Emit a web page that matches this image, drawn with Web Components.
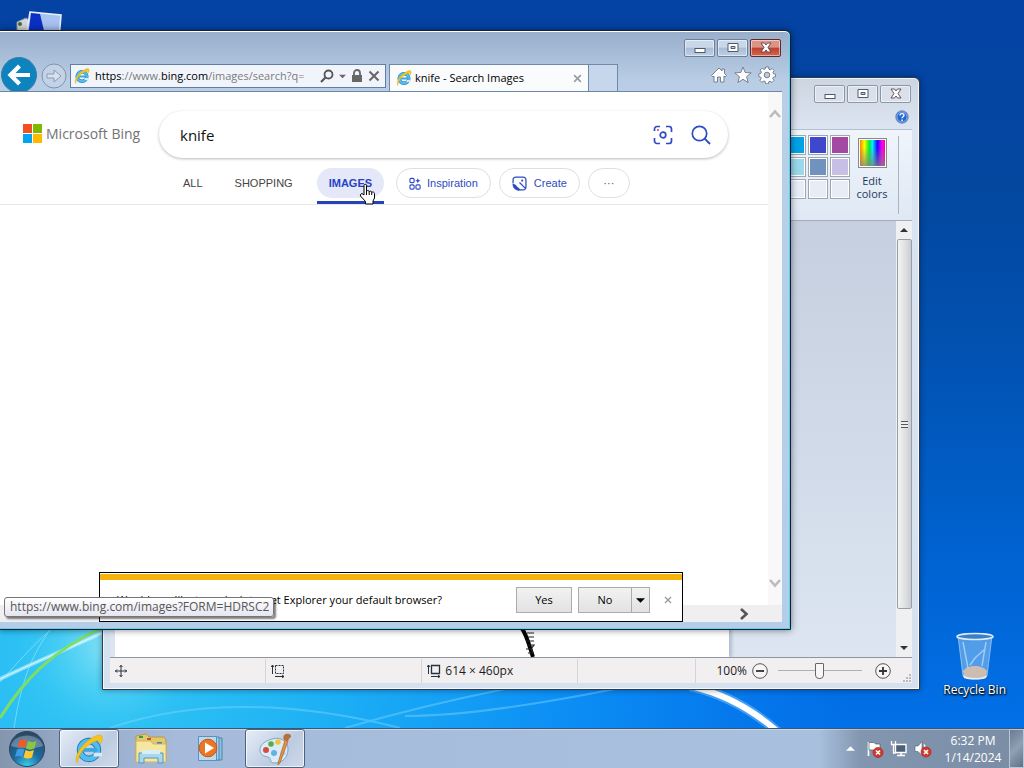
<!DOCTYPE html>
<html lang="en">
<head>
<meta charset="utf-8">
<title>Desktop</title>
<style>
  html, body { height: 100%; margin: 0; }
  body { overflow: hidden; font: 12px/16px "Open Sans", "Noto Sans", sans-serif; color: #000; }
</style>
</head>
<body>
<win-desktop>
  <desktop-icon class="computer" icon="computer"></desktop-icon>
  <desktop-icon class="bin" icon="bin">Recycle Bin</desktop-icon>
  <paint-window></paint-window>
  <browser-window>
    <bing-page></bing-page>
    <notice-bar slot="overlay">Would you like to make Internet Explorer your default browser?</notice-bar>
    <link-tip slot="overlay">https://www.bing.com/images?FORM=HDRSC2</link-tip>
  </browser-window>
  <task-bar slot="bar"></task-bar>
</win-desktop>

<script>
const ICONS = {
  ie: `<svg viewBox="0 0 32 32"><circle cx="16" cy="17" r="9.5" fill="none" stroke="#1879b8" stroke-width="7"/><circle cx="16" cy="17" r="9.5" fill="none" stroke="#52bdec" stroke-width="5"/><path d="M8 15h17v4H8z" fill="#3ba7df"/><path d="M21 20h9v4h-9z" fill="#dbe7f3"/><path d="M4 31C-1 28 5 15 14 8 21 2 29-1 30 3c1 3-1 6-2 8 0-5-4-5-10-1C9 15 4 24 4 31z" fill="#f5c51d" stroke="#e2a913" stroke-width=".6"/></svg>`,
  home: `<svg viewBox="0 0 18 18"><path d="M1.500 9.500 9 2l3 3V3h2.500v4.500l2 2-1.500 1.500-1-1V16h-3.500v-5h-3v5H4v-6l-1 1z" fill="#fff" stroke="#75818f" stroke-linejoin="round"/></svg>`,
  star: `<svg viewBox="0 0 18 18"><path d="m9 1 2.200 5.500 6 .4-4.600 3.800 1.500 5.800L9 13.300l-5.100 3.200 1.500-5.800L.8 6.900l6-.4z" fill="#fff" stroke="#75818f" stroke-linejoin="round"/></svg>`,
  gear: `<svg viewBox="0 0 18 18"><path d="M7.500 1h3l.4 2.200 1.300.6 2-1.300 2 2-1.300 2 .6 1.300 2 .4v2.500l-2.200.5-.6 1.300 1.300 2-2 2-2-1.300-1.300.6-.4 2h-2.600l-.5-2.200-1.300-.6-2 1.300-2-2 1.300-2-.6-1.200L.8 10.500V7.800l2-.4.6-1.300-1.300-2 2-2 2 1.300 1.200-.6z" fill="#fff" stroke="#75818f"/><circle cx="9" cy="9" r="2.800" fill="#b8cde4" stroke="#75818f"/></svg>`,
  back: `<svg viewBox="0 0 36 36"><circle cx="18" cy="18" r="17.500" fill="#0d84bd" stroke="#3b7ba5"/><path d="M29 18H10m8.500-9L9.500 18l9 9" fill="none" stroke="#fff" stroke-width="4.200"/></svg>`,
  forward: `<svg viewBox="0 0 26 26"><circle cx="13" cy="13" r="12" fill="#c3d2e6" stroke="#8294ab"/><path d="M6 11h7V7l7 6-7 6v-4H6z" fill="#d7e2f0" stroke="#8b9bb1" stroke-linejoin="round"/></svg>`,
  find: `<svg viewBox="0 0 14 14"><circle cx="8.500" cy="5.500" r="4" fill="none" stroke="#555" stroke-width="1.800"/><path d="M5.500 8.500 1 13" stroke="#555" stroke-width="2.200"/></svg>`,
  down: `<svg viewBox="0 0 8 8"><path d="M0 2h8L4 6z" fill="currentColor"/></svg>`,
  up: `<svg viewBox="0 0 8 8"><path d="M0 6h8L4 2z" fill="currentColor"/></svg>`,
  lock: `<svg viewBox="0 0 12 14"><path d="M3 7V4a3 3 0 0 1 6 0v3" fill="none" stroke="#666" stroke-width="1.800"/><path d="M1 6h10v7H1z" fill="#666"/></svg>`,
  cross: `<svg viewBox="0 0 12 12"><path d="m1.500 1.500 9 9m0-9-9 9" stroke="currentColor" stroke-width="2"/></svg>`,
  chevron: `<svg viewBox="0 0 12 12"><path d="m1 9 5-5.500L11 9" fill="none" stroke="currentColor" stroke-width="2.600"/></svg>`,
  min: `<svg viewBox="0 0 14 12"><rect x="2" y="6.500" width="10" height="4" fill="#fff" stroke="#4f5b6b"/></svg>`,
  max: `<svg viewBox="0 0 14 12"><path d="M2 1.500h10v8H2z" fill="#fff" stroke="#4f5b6b"/><path d="M5 4.500h4v2H5z" fill="#c6d3e2" stroke="#4f5b6b"/></svg>`,
  close: `<svg viewBox="0 0 14 12"><path d="M2 1h3.500L7 3l1.500-2H12L9 5.500l3 4.500H8.500L7 8l-1.500 2H2l3-4.500z" fill="#fff" stroke="#5a4650" stroke-width=".9"/></svg>`,
  lens: `<svg viewBox="0 0 20 20"><g fill="none" stroke="#2f4bc0" stroke-width="1.700"><path d="M1.500 6V4a2.500 2.500 0 0 1 2.500-2.500h3M13 1.500h3A2.500 2.500 0 0 1 18.500 4v3M18.500 13v3a2.500 2.500 0 0 1-2.500 2.500h-3M7 18.500H4A2.500 2.500 0 0 1 1.500 16v-3"/><circle cx="10" cy="10" r="2.800"/></g><circle cx="5" cy="5" r="1" fill="#b040a0"/></svg>`,
  search: `<svg viewBox="0 0 20 20"><circle cx="8.500" cy="8.500" r="7.200" fill="none" stroke="#2f4bc0" stroke-width="1.700"/><path d="m13.700 13.700 5.300 5.300" stroke="#2f4bc0" stroke-width="1.900"/></svg>`,
  grid: `<svg viewBox="0 0 14 14"><g fill="none" stroke="#2f4bc0" stroke-width="1.200"><rect x="1" y="1.500" width="4.500" height="4.500" rx="1.200"/><rect x="1" y="8.500" width="4.500" height="4.500" rx="1.200"/><rect x="7.500" y="8.500" width="4.500" height="4.500" rx="1.200"/></g><path d="m9.500 1 .8 2.200 2.200.8-2.200.8-.8 2.200-.8-2.200L6.500 4l2.200-.8z" fill="#2f4bc0"/></svg>`,
  create: `<svg viewBox="0 0 14 14"><path d="M5 13h5.500A2.500 2.500 0 0 0 13 10.500v-7A2.500 2.500 0 0 0 10.500 1h-7A2.500 2.500 0 0 0 1 3.500V7m6-1 6 6" fill="none" stroke="#2f4bc0" stroke-width="1.200"/><path d="M.5 7.500C3 7 4 9 5.500 10.500L8 12.500l-1.500 1C3 13.500.5 11 .5 7.500z" fill="#2f4bc0"/><circle cx="9.500" cy="4.300" r="1" fill="#2f4bc0"/></svg>`,
  hand: `<svg viewBox="0 0 18 22"><path d="M5 12V2.500C5 .8 7.500.8 7.500 2.500V8c1-.8 2.500-.5 2.700.5 1-.6 2.300-.3 2.500.7 1.200-.6 2.800 0 2.800 1.500V15l-1.500 3v3h-7.500v-2.500L1.500 13C.6 11 3 10 4 11.200z" fill="#fff" stroke="#000" stroke-linejoin="round"/><path d="M7.500 8v4m2.700-3.500V12m2.500-2.800V12" stroke="#000" fill="none"/></svg>`,
  help: `<svg viewBox="0 0 14 14"><circle cx="7" cy="7" r="6.200" fill="#2465d0" stroke="#7a8fb0"/><circle cx="7" cy="7" r="5" fill="none" stroke="#9cc4ff" stroke-width=".8"/><path d="M5 5.500C5 3 9 3 9 5.300 9 6.700 7 6.700 7 8.300" fill="none" stroke="#fff" stroke-width="1.400"/><path d="M6.300 9.500h1.500V11H6.300z" fill="#fff"/></svg>`,
  move: `<svg viewBox="0 0 12 12"><path d="M6 0v12M0 6h12M4.500 2 6 .5 7.500 2M4.500 10 6 11.500 7.500 10M2 4.500.5 6 2 7.500M10 4.500 11.500 6 10 7.500" fill="none" stroke="#26323e"/></svg>`,
  select: `<svg viewBox="0 0 14 14"><path d="M4.500 1.500h8v8h-8z" fill="none" stroke="#26323e" stroke-dasharray="2 1"/><path d="M1.500 10V1M0 3l1.500-2L3 3M4 12.500h9M11 11l2 1.500-2 1.500" fill="none" stroke="#26323e"/></svg>`,
  canvas: `<svg viewBox="0 0 14 14"><path d="M4.500 1.500h8v8h-8z" fill="none" stroke="#26323e" stroke-width="1.300"/><path d="M1.500 10V1M0 3l1.500-2L3 3M4 12.500h9M11 11l2 1.500-2 1.500" fill="none" stroke="#26323e"/></svg>`,
  minus: `<svg viewBox="0 0 16 16"><circle cx="8" cy="8" r="7.300" fill="#f5f5f5" stroke="#555"/><path d="M4 8h8" stroke="#333" stroke-width="1.800"/></svg>`,
  plus: `<svg viewBox="0 0 16 16"><circle cx="8" cy="8" r="7.300" fill="#f5f5f5" stroke="#555"/><path d="M4 8h8M8 4v8" stroke="#333" stroke-width="1.800"/></svg>`,
  resize: `<svg viewBox="0 0 9 9"><path d="M7 1h2v2H7zM4 4h2v2H4zM7 4h2v2H7zM1 7h2v2H1zM4 7h2v2H4zM7 7h2v2H7z" fill="#b9b9c0"/></svg>`,
  start: `<svg viewBox="0 0 38 38"><defs><radialGradient id="o" cx=".5" cy="1" r=".95"><stop offset="0" stop-color="#3fd2ee"/><stop offset=".45" stop-color="#1b6aa0"/><stop offset="1" stop-color="#2c4865"/></radialGradient></defs><circle cx="19" cy="19" r="17.500" fill="url(#o)" stroke="#2b4560"/><path d="M3 16C6 2 32 2 35 16 26 19 12 19 3 16z" fill="#fff" opacity=".28"/><path d="M11.500 10.500c3-1.500 5-1.500 7.500 0l-2 7.500c-3-1.500-5-1.500-7.500 0z" fill="#f0592a"/><path d="M20 11c3 1.500 5.500 1.500 8.500 0l-2 7.500c-3 1.500-5.500 1.500-8.500 0z" fill="#8cc63e"/><path d="M9 19.500c3-1.500 5-1.500 7.500 0l-2 7.500c-3-1.500-5-1.500-7.500 0z" fill="#3d9be0"/><path d="M17.500 20c3 1.500 5.500 1.500 8.500 0l-2 7.500c-3 1.500-5.500 1.500-8.500 0z" fill="#fdc72e"/></svg>`,
  folder: `<svg viewBox="0 0 34 32"><path d="M2 3 12 1l3 3h15l2 3v21H2z" fill="#e3c96c" stroke="#b89b45"/><path d="M5 3h4v2H5z" fill="#3d9b45"/><path d="M13 5h4v2h-4z" fill="#cf4a30"/><path d="M23 9h5v2h-5z" fill="#3e86b8"/><path d="M2 8h15l2 3h13v18H2z" fill="#f5e6a0" stroke="#d0b75e"/><path d="M5 30V20h24v10h-5v-5H10v5z" fill="#a9d8ee" stroke="#5297bd"/><path d="M8 17h18v4H8z" fill="#d8eef7"/></svg>`,
  media: `<svg viewBox="0 0 28 28"><path d="M8 3h17v22H8z" fill="#8fc0e0" stroke="#4d86ad"/><path d="M5 2h17v23H5z" fill="#a8d0ea" stroke="#4d86ad"/><path d="M1.500 1.500h18v24h-18z" fill="#b9daf0" stroke="#5b93b8"/><circle cx="11" cy="13" r="8.800" fill="#ee7623" stroke="#c9560f"/><path d="M8 7.500 17 13l-9 5.500z" fill="#fff"/></svg>`,
  palette: `<svg viewBox="0 0 34 34"><path d="M14 7C23 4 30 10 30 17c0 9-6 14-14 14-5 0-2-5-6-6-5-1-7-2-8-6C1 13 7 9 14 7z" fill="#dcecf7" stroke="#7fa5c4"/><circle cx="8" cy="18" r="3" fill="#d84b3e"/><circle cx="13" cy="12" r="2.800" fill="#54ad4b"/><circle cx="20" cy="10" r="2.800" fill="#f2c43a"/><circle cx="16" cy="21" r="3" fill="#62b2e4"/><circle cx="25" cy="21" r="2.600" fill="#bcd0e0"/><path d="m20 31 7-23 3 1-8 22-2 2z" fill="#e0924a" stroke="#a96327" stroke-width=".7"/><path d="M26 8c-2-4 1-7 5-6 2 0 3 3 1 4s-1 2-2 3z" fill="#b5703f"/></svg>`,
  flag: `<svg viewBox="0 0 18 18"><path d="M2.500 2v14" stroke="#fff" stroke-width="1.600"/><path d="M3 2.500h5l1.500 1.500H14v8H9L7.500 10H3z" fill="#fff" stroke="#4e5c6c" stroke-width=".7"/><circle cx="12" cy="12.500" r="5" fill="#d5382c" stroke="#a02018" stroke-width=".6"/><path d="m10 10.500 4 4m0-4-4 4" stroke="#fff" stroke-width="1.600"/></svg>`,
  network: `<svg viewBox="0 0 18 18"><path d="M5.500 4.500h10.500v8H5.500z" fill="#4d6076" stroke="#fff" stroke-width="1.400"/><path d="M7 15.500h8M11 12.500v3" stroke="#fff" stroke-width="1.600"/><path d="M1.500 1v3.500h4V1M3.500 4.500V13h2" fill="none" stroke="#fff" stroke-width="1.300"/></svg>`,
  sound: `<svg viewBox="0 0 18 18"><path d="M1 6h3l4-4.500v14L4 11.500H1z" fill="#fff" stroke="#4e5c6c" stroke-width=".6"/><path d="M10 4.500c1.500 2 1.500 5 0 8" fill="none" stroke="#fff" stroke-width="1.300"/><circle cx="12" cy="12" r="5" fill="#d5382c" stroke="#a02018" stroke-width=".6"/><path d="m10 10 4 4m0-4-4 4" stroke="#fff" stroke-width="1.600"/></svg>`,
  computer: `<svg viewBox="0 0 48 48"><path d="m2 12 9-4 3 2v22H2z" fill="#d5d8da" stroke="#8b949c"/><circle cx="5" cy="14" r="2" fill="#3e6b38"/><path d="m15 2 31 3-2 24-33-2z" fill="#a9c2f2" stroke="#e8eef5" stroke-width="1.600"/><path d="m16 3 9 1 6 25-18-2z" fill="#0b2fc4"/></svg>`,
  bin: `<svg viewBox="0 0 40 48"><path d="m3 4 5 40c4 4 20 4 24 0l5-40z" fill="#93c6f2" fill-opacity=".55" stroke="#c3dff5" stroke-opacity=".6"/><path d="M8 39c5-7 20-6 24 0l-1 5c-5 3-17 3-22 0z" fill="#cbbdb2"/><path d="M8 43c5 4 20 4 24 0l-1 3c-5 2-17 2-22 0z" fill="#e9eef2"/><path d="m8 10 5 26m18-26-4 24M15 33l5-7 10-9" stroke="#e1f1ff" stroke-opacity=".55" fill="none" stroke-width="1.500"/><ellipse cx="20" cy="4.500" rx="18" ry="3" fill="#3b80c6" stroke="#dcecf8" stroke-width="1.600"/></svg>`
};

class BaseElement extends HTMLElement {
  connectedCallback() {
    if (!this.shadowRoot) {
      this.attachShadow({ mode: "open" }).innerHTML = this.render();
    }
  }
}

// <win-icon name="..." w="16" h="16">
class WinIcon extends BaseElement {
  render() {
    const w = this.getAttribute("w") || 16;
    const h = this.getAttribute("h") || w;
    return `
      <style>
        :host { display: block; flex: none; width: ${w}px; height: ${h}px; }
        svg { display: block; width: 100%; height: 100%; }
      </style>
      ${ICONS[this.getAttribute("name")]}`;
  }
}

class WinDesktop extends BaseElement {
  render() {
    return `
      <style>
        :host { display: flex; flex-direction: column; height: 100%; min-height: 100vh; }
        main {
          flex: 1;
          position: relative;
          overflow: hidden;
          background: linear-gradient(180deg, #0442a4 0, #03479f 25%, #0250ae 45%, #0062cf 75%, #0270e8 100%);
        }
        .wall { position: absolute; inset: 0; width: 100%; height: 100%; }
        /* windows and icons sit freely on the desktop */
        ::slotted(desktop-icon), ::slotted(paint-window), ::slotted(browser-window) { position: absolute; }
        ::slotted(.computer) { top: 10px; left: 15px; }
        ::slotted(.bin) { right: 18px; top: 632px; }
        ::slotted(paint-window) { top: 77px; left: 102px; right: 104px; bottom: 38px; }
        ::slotted(browser-window) { top: 30px; left: -1px; right: 233px; bottom: 98px; }
      </style>
      <main>
        <svg class="wall" viewBox="0 0 1024 728" preserveAspectRatio="none">
          <defs>
            <radialGradient id="glow" gradientUnits="userSpaceOnUse" cx="90" cy="660" r="760">
              <stop offset="0" stop-color="#35c8f4"/><stop offset=".3" stop-color="#1eb2f5"/>
              <stop offset=".62" stop-color="#0c8ff5"/><stop offset=".9" stop-color="#0474ea"/>
              <stop offset="1" stop-color="#0474ea" stop-opacity="0"/>
            </radialGradient>
            <radialGradient id="shine" gradientUnits="userSpaceOnUse" cx="110" cy="645" r="95">
              <stop offset="0" stop-color="#8ce4f5"/><stop offset="1" stop-color="#35c8f4" stop-opacity="0"/>
            </radialGradient>
          </defs>
          <path d="M0 600h800l140 128H0z" fill="url(#glow)"/>
          <path d="M0 600h300v128H0z" fill="url(#shine)"/>
          <g fill="none">
            <path d="M-4 681C30 664 70 648 104 632" stroke="#d4f5ff" stroke-width="4" opacity=".55"/>
            <path d="M-4 681C30 664 70 648 104 632" stroke="#fff" opacity=".7"/>
            <path d="M0 682C20 660 35 643 55 626M14 728C20 690 28 660 50 630" stroke="#b5efff" opacity=".5"/>
            <path d="M0 718C24 680 52 650 104 627" stroke="#7ede64" stroke-width="3"/>
            <path d="M110 728C190 700 290 700 400 728M345 728C400 712 450 700 510 688M405 716C470 716 560 700 620 688" stroke="#7fd4ff" stroke-width="2" opacity=".45"/>
            <path d="M690 686C726 694 753 710 778 732" stroke="#7ac6ff" stroke-width="10" opacity=".5"/>
            <path d="M690 686C726 694 753 710 778 732" stroke="#fff" stroke-width="6"/>
          </g>
        </svg>
        <slot></slot>
      </main>
      <slot name="bar"></slot>`;
  }
}

class DesktopIcon extends BaseElement {
  render() {
    return `
      <style>
        :host { display: flex; flex-direction: column; align-items: center; gap: 2px; color: #fff; text-shadow: 0 1px 2px #000, 1px 1px 2px #000; }
      </style>
      <win-icon name="${this.getAttribute("icon")}" w="${this.getAttribute("icon") === "bin" ? 40 : 48}" h="48"></win-icon>
      <span><slot></slot></span>`;
  }
}

class CaptionButtons extends BaseElement {
  render() {
    return `
      <style>
        :host { display: flex; gap: 2px; }
        button {
          display: flex; align-items: center; justify-content: center;
          box-sizing: border-box; width: 31px; height: 18px; padding: 0;
          border: 1px solid #6d7f99; border-radius: 2px;
          background: linear-gradient(#c9d8e9 45%, #a9bed7 50%, #bccfe4);
          box-shadow: inset 0 0 0 1px rgba(255, 255, 255, .5);
        }
        .close { background: linear-gradient(#dd9484 45%, #c0402a 50%, #d0674f); border-color: #5c2a30; }
        :host([inactive]) button { background: rgba(225, 232, 241, .5); border-color: #8c97a8; }
      </style>
      <button aria-label="Minimize"><win-icon name="min" w="14" h="12"></win-icon></button>
      <button aria-label="Maximize"><win-icon name="max" w="14" h="12"></win-icon></button>
      <button class="close" aria-label="Close"><win-icon name="close" w="14" h="12"></win-icon></button>`;
  }
}

class PaintWindow extends BaseElement {
  render() {
    const colors = ["#00a2e8", "#3f48cc", "#a349a4", "#99d9ea", "#7092be", "#c8bfe7", "", "", ""];
    return `
      <style>
        :host {
          display: flex; flex-direction: column; box-sizing: border-box;
          padding: 0 7px 6px; border: 1px solid #2c3c50; border-radius: 6px 6px 0 0;
          background: linear-gradient(#ccd5e0 0, #dbe4f0 50px, #d5e1ef);
          box-shadow: inset 0 0 0 1px rgba(255, 255, 255, .7), 0 0 6px rgba(0, 0, 30, .4);
        }
        header { display: flex; flex-direction: column; align-items: flex-end; gap: 7px; padding: 7px 1px 5px 0; }
        header button, footer button { padding: 0; border: 0; background: none; }
        header button { margin-right: 2px; }
        .ribbon {
          display: flex; justify-content: flex-end; gap: 6px; height: 90px;
          border-top: 1px solid #b3c0d0; border-bottom: 1px solid #a3aebd;
          background: linear-gradient(#f0f5fb, #dfe8f4);
        }
        .swatches { display: grid; grid-template-columns: repeat(3, 20px); grid-auto-rows: 20px; gap: 2px; align-content: start; padding-top: 5px; }
        .swatches button { border: 1px solid #a0a6ae; padding: 0; background: #e6edf6; box-shadow: inset 0 0 0 1px #fff; }
        .edit {
          display: flex; flex-direction: column; align-items: center; gap: 6px; width: 32px;
          padding: 8px 0 0; border: 0; background: none; font: inherit; font-size: 11px; line-height: 13px; color: #1e395b;
        }
        .rainbow {
          box-sizing: border-box; width: 29px; height: 30px; border: 1px solid #888; box-shadow: inset 0 0 0 1px #fff;
          background: linear-gradient(rgba(128, 128, 128, 0) 30%, rgba(128, 128, 128, .8)), linear-gradient(90deg, #f60, #ff0 20%, #0e3 38%, #0ef 50%, #20f 68%, #f0f 86%, #f04);
        }
        .rule { width: 1px; margin: 6px 13px 6px 4px; background: #a9b5c5; }
        .work { flex: 1; display: flex; background: linear-gradient(#c5cfdf, #dce5f1); min-height: 0; }
        .paper { flex: 1; display: flex; justify-content: flex-end; align-items: flex-end; margin: 5px 0 0 5px; background: #fff; box-shadow: 3px 0 3px #b4bfcf; }
        .paper svg { width: 20px; height: 30px; margin-right: 190px; }
        .gap { width: 167px; }
        .scroll { display: flex; flex-direction: column; width: 16px; background: #eef0f2; color: #333; }
        .scroll win-icon { margin: 5px 4px; }
        .scroll .end { margin-top: 35px; }
        .thumb { flex: 1; display: flex; align-items: center; justify-content: center; margin-left: 1px; border: 1px solid #989ea6; border-radius: 2px; background: linear-gradient(90deg, #f4f4f4, #dcdee1 60%, #c9ccd1); }
        .thumb i { width: 7px; height: 7px; background: repeating-linear-gradient(#555 0 1px, #eee 1px 3px); }
        footer { display: flex; align-items: center; height: 25px; border-top: 1px solid #8f959e; background: #f1eff0; color: #1c1c1c; }
        footer > div { display: flex; align-items: center; gap: 4px; height: 24px; box-sizing: border-box; padding-left: 5px; border-right: 1px solid #d5d5d8; }
        .cell { flex: 1; }
        .zoom { gap: 5px; padding: 0 1px 0 20px; border: 0; }
        .zoom win-icon[name="resize"] { align-self: flex-end; margin: 0 0 1px 6px; }
        input { appearance: none; width: 84px; height: 16px; margin: 0 8px 0 5px; background: linear-gradient(#b3adad 0 0) center / 100% 1px no-repeat; }
        input::-webkit-slider-thumb { appearance: none; width: 9px; height: 16px; border: 1px solid #666; border-radius: 1px 1px 4px 4px; background: #f7f7f7; }
      </style>
      <header>
        <caption-buttons inactive></caption-buttons>
        <button aria-label="Help"><win-icon name="help" w="14"></win-icon></button>
      </header>
      <div class="ribbon">
        <div class="swatches">${colors.map(c => `<button aria-label="Color" style="${c && "background:" + c}"></button>`).join("")}</div>
        <button class="edit"><span class="rainbow"></span><span>Edit<br>colors</span></button>
        <div class="rule"></div>
      </div>
      <div class="work">
        <div class="paper">
          <svg viewBox="0 0 20 30"><path d="M2 0C8 8 10 18 14 30" fill="none" stroke="#000" stroke-width="4"/><path d="M8 6h7M9 10h6M7 14h8M8 18h7l-3 4H7M9 26h5l-2-4" fill="none" stroke="#222" stroke-width="1.200"/></svg>
        </div>
        <div class="gap"></div>
        <div class="scroll"><win-icon name="up" w="8"></win-icon><div class="thumb"><i></i></div><win-icon class="end" name="down" w="8"></win-icon></div>
      </div>
      <footer>
        <div class="cell"><win-icon name="move" w="12"></win-icon></div>
        <div class="cell"><win-icon name="select" w="14"></win-icon></div>
        <div class="cell"><win-icon name="canvas" w="14"></win-icon>614 × 460px</div>
        <div style="width: 118px"></div>
        <div class="zoom">
          <label for="zoom">100%</label>
          <button aria-label="Zoom out"><win-icon name="minus"></win-icon></button>
          <input id="zoom" type="range" value="50">
          <button aria-label="Zoom in"><win-icon name="plus"></win-icon></button>
          <win-icon name="resize" w="9"></win-icon>
        </div>
      </footer>`;
  }
}

class BrowserWindow extends BaseElement {
  render() {
    return `
      <style>
        :host {
          display: flex; flex-direction: column; box-sizing: border-box; padding: 0 8px 7px 0;
          border: 1px solid #10202e; border-radius: 0 6px 0 0;
          background: linear-gradient(#98aeca 0, #b9cde5 50px, #b9cfe8 80px, #b4cde8);
          box-shadow: inset 0 1px 0 #fff, inset -1px -1px 0 #57d4ee, 0 0 7px rgba(0, 0, 20, .5);
        }
        .title { display: flex; justify-content: flex-end; padding: 8px 1px 0 0; }
        nav { display: flex; align-items: flex-end; height: 34px; overflow: hidden; border-bottom: 1px solid #6f87a5; }
        .nav-btn { padding: 0; border: 0; background: none; }
        .back { align-self: flex-start; margin-left: 1px; }
        .forward { margin: 0 3px 2px 4px; }
        .address {
          flex: 1; display: flex; align-items: center; gap: 5px; box-sizing: border-box; min-width: 0; height: 24px;
          margin: 0 3px 3px 0; padding: 0 5px 0 3px; border: 1px solid #5f7fa7; background: #f1f5fb; color: #666;
        }
        .url { flex: 1; min-width: 0; white-space: nowrap; font-size: 11px; color: #7b7b7b; }
        .url b { font-weight: normal; color: #000; }
        .tab {
          display: flex; align-items: center; gap: 3px; box-sizing: border-box; width: 200px; height: 27px; padding: 0 6px;
          border: 1px solid #7089a8; border-bottom: 0; background: #f9fbfd; color: #000; font-size: 11px;
        }
        .tab span { flex: 1; white-space: nowrap; }
        .tab win-icon:last-child { color: #999; }
        .new-tab { box-sizing: border-box; width: 29px; height: 27px; border: 1px solid #7089a8; border-width: 1px 1px 0 0; background: #c6d6ec; }
        .tools { display: flex; justify-content: flex-end; gap: 6px; box-sizing: border-box; width: 164px; padding: 0 6px 7px 0; }
        section { flex: 1; min-height: 0; position: relative; display: grid; grid-template: 1fr 17px / 1fr 14px; background: #fff; }
        .vbar { display: flex; flex-direction: column; justify-content: space-between; align-items: center; padding: 16px 0; background: #f8f8f8; color: #bcbcbc; }
        .flip { transform: rotate(180deg); }
        .hbar { grid-column: 1 / 3; display: flex; align-items: center; justify-content: flex-end; padding-right: 32px; background: #f0eff0; color: #555; }
        .right { transform: rotate(90deg); }
        ::slotted([slot="overlay"]) { position: absolute; }
        ::slotted(notice-bar) { left: 99px; right: 99px; bottom: 0; }
        ::slotted(link-tip) { left: 4px; bottom: 5px; }
      </style>
      <div class="title"><caption-buttons></caption-buttons></div>
      <nav>
        <button class="nav-btn back" aria-label="Back"><win-icon name="back" w="36"></win-icon></button>
        <button class="nav-btn forward" aria-label="Forward"><win-icon name="forward" w="26"></win-icon></button>
        <div class="address">
          <win-icon name="ie" w="16"></win-icon>
          <span class="url"><b>https</b>://www.<b>bing.com</b>/images/search?q=</span>
          <win-icon name="find" w="14"></win-icon>
          <win-icon name="down" w="7"></win-icon>
          <win-icon name="lock" w="12" h="14"></win-icon>
          <win-icon name="cross" w="12"></win-icon>
        </div>
        <div class="tab"><win-icon name="ie" w="16"></win-icon><span>knife - Search Images</span><win-icon name="cross" w="9"></win-icon></div>
        <button class="new-tab" aria-label="New tab"></button>
        <div class="tools"><win-icon name="home" w="18"></win-icon><win-icon name="star" w="18"></win-icon><win-icon name="gear" w="18"></win-icon></div>
      </nav>
      <section>
        <slot></slot>
        <div class="vbar"><win-icon name="chevron" w="12"></win-icon><win-icon class="flip" name="chevron" w="12"></win-icon></div>
        <div class="hbar"><win-icon class="right" name="chevron" w="12"></win-icon></div>
        <slot name="overlay"></slot>
      </section>`;
  }
}

class BingPage extends BaseElement {
  render() {
    return `
      <style>
        :host { display: block; min-width: 0; overflow: hidden; background: #fff; }
        .top { display: flex; align-items: center; padding: 19px 40px 0 23px; }
        .logo { display: flex; align-items: center; gap: 4px; width: 136px; padding-bottom: 2px; color: #737373; text-decoration: none; font: 500 14px/20px "Open Sans", sans-serif; white-space: nowrap; }
        .squares { flex: none; display: grid; grid-template-columns: 9px 9px; grid-auto-rows: 9px; gap: 1px; }
        .box { flex: 1; display: flex; align-items: center; gap: 18px; height: 47px; padding: 0 17px 0 21px; border-radius: 24px; box-shadow: 0 1px 3px rgba(0, 0, 0, .28); }
        .box input { flex: 1; min-width: 0; padding: 0; border: 0; outline: 0; background: none; font: 15px/24px "Open Sans", sans-serif; color: #111; }
        .box button { padding: 0; border: 0; background: none; }
        nav { display: flex; gap: 8px; height: 47px; box-sizing: border-box; padding: 10px 0 0 167px; border-bottom: 1px solid #e8e8e8; font: 11px/30px "Liberation Sans", Arial, sans-serif; }
        nav a { position: relative; height: 30px; color: #444; text-decoration: none; white-space: nowrap; }
        .plain { padding: 0 16px; margin-right: -8px; }
        .on { z-index: 0; box-sizing: border-box; height: 36px; margin: 0 4px 0 8px; padding: 0 12px; border-bottom: 3px solid #2743b8; font-weight: bold; color: #2743c4; }
        .on::before { content: ""; position: absolute; inset: 0 0 3px; z-index: -1; border-radius: 15px; background: #e4e8f8; }
        /* mouse pointer over the tab */
        .on win-icon { position: absolute; right: 7px; top: 15px; }
        .pill { display: flex; align-items: center; gap: 5px; box-sizing: border-box; height: 30px; padding: 0 12px; border: 1px solid #dcdfe4; border-radius: 15px; background: #fff; font: inherit; color: #2f4bc0; }
        .create { gap: 7px; }
        .more { width: 42px; justify-content: center; color: #555; }
      </style>
      <div class="top">
        <a class="logo" href="#"><span class="squares">
          <i style="background:#f25022"></i><i style="background:#7fba00"></i><i style="background:#00a4ef"></i><i style="background:#ffb900"></i>
        </span>Microsoft Bing</a>
        <div class="box">
          <input type="text" value="knife" aria-label="Search">
          <button aria-label="Visual search"><win-icon name="lens" w="20"></win-icon></button>
          <button aria-label="Search"><win-icon name="search" w="20"></win-icon></button>
        </div>
      </div>
      <nav>
        <a class="plain" href="#">ALL</a>
        <a class="plain" href="#">SHOPPING</a>
        <a class="on" href="#">IMAGES<win-icon name="hand" w="18" h="22"></win-icon></a>
        <button class="pill"><win-icon name="grid" w="13"></win-icon>Inspiration</button>
        <button class="pill create"><win-icon name="create" w="15"></win-icon>Create</button>
        <button class="pill more">···</button>
      </nav>`;
  }
}

class NoticeBar extends BaseElement {
  render() {
    return `
      <style>
        :host {
          display: flex; align-items: center; box-sizing: border-box; height: 50px; padding: 6px 10px 0 17px;
          border: 1px solid #000; background: linear-gradient(#fff 0 1px, #f5b30b 1px 7px, #fff 7px);
          font-size: 11px;
        }
        span { flex: 1; white-space: nowrap; }
        button { box-sizing: border-box; height: 26px; padding: 0; border: 1px solid #acacac; background: linear-gradient(#f2f2f2, #e2e2e2); font: inherit; color: #000; }
        .yes { width: 56px; margin-right: 6px; }
        .no { width: 54px; }
        .drop { display: flex; align-items: center; justify-content: center; width: 19px; margin: 0 14px 0 -1px; }
        .x { border: 0; background: none; color: #9a9a9a; }
      </style>
      <span><slot></slot></span>
      <button class="yes">Yes</button>
      <button class="no">No</button>
      <button class="drop" aria-label="More options"><win-icon name="down" w="9"></win-icon></button>
      <button class="x" aria-label="Close"><win-icon name="cross" w="8"></win-icon></button>`;
  }
}

class LinkTip extends BaseElement {
  render() {
    return `
      <style>
        :host {
          display: block; padding: 1px 4px 1px 5px; border: 1px solid #767676; border-radius: 3px; white-space: nowrap;
          background: linear-gradient(#fff, #e4e5f0); color: #575757; box-shadow: 2px 2px 2px rgba(0, 0, 0, .5);
        }
      </style>
      <slot></slot>`;
  }
}

class TaskBar extends BaseElement {
  render() {
    return `
      <style>
        :host {
          display: flex; align-items: stretch; box-sizing: border-box; height: 40px; border-top: 1px solid #3c5675; color: #fff;
          background: linear-gradient(90deg, #8496ad 0, #94a8c4 60px, #a6bbdb 180px, #a8c0dd 80%, #8296b0 84%, #7b8da5);
          box-shadow: inset 0 1px 0 rgba(255, 255, 255, .35);
        }
        button { flex: none; display: flex; align-items: center; justify-content: center; box-sizing: border-box; width: 60px; padding: 0; border: 1px solid transparent; border-radius: 3px; background: none; }
        .start { width: 54px; margin-right: 5px; }
        .open { border-color: #4d627f; background: linear-gradient(135deg, #e6edf7, #bccbe1 60%, #cfdaea); box-shadow: inset 0 0 0 1px rgba(255, 255, 255, .7); }
        .open + button { margin-left: 2px; }
        .paint { margin-left: 4px; }
        .tray { flex: 1; display: flex; align-items: center; justify-content: flex-end; gap: 6px; padding-right: 9px; }
        .tray win-icon:first-child { margin-right: 5px; }
        time { display: flex; flex-direction: column; align-items: center; width: 54px; margin-left: 8px; line-height: 17px; white-space: nowrap; }
        .peek { width: 15px; margin: 0; border: 1px solid #b9c6d6; border-radius: 0; background: linear-gradient(135deg, #6a7c93, #8f9fb4 50%, #5e7089); }
      </style>
      <button class="start" aria-label="Start"><win-icon name="start" w="38"></win-icon></button>
      <button class="open" aria-label="Internet Explorer"><win-icon name="ie" w="30"></win-icon></button>
      <button aria-label="Explorer"><win-icon name="folder" w="34" h="32"></win-icon></button>
      <button aria-label="Media Player"><win-icon name="media" w="28"></win-icon></button>
      <button class="open paint" aria-label="Paint"><win-icon name="palette" w="34"></win-icon></button>
      <div class="tray">
        <win-icon name="up" w="9"></win-icon>
        <win-icon name="flag" w="18"></win-icon>
        <win-icon name="network" w="18"></win-icon>
        <win-icon name="sound" w="18"></win-icon>
        <time><span>6:32 PM</span><span>1/14/2024</span></time>
      </div>
      <button class="peek" aria-label="Show desktop"></button>`;
  }
}

customElements.define("win-icon", WinIcon);
customElements.define("caption-buttons", CaptionButtons);
customElements.define("win-desktop", WinDesktop);
customElements.define("desktop-icon", DesktopIcon);
customElements.define("paint-window", PaintWindow);
customElements.define("browser-window", BrowserWindow);
customElements.define("bing-page", BingPage);
customElements.define("notice-bar", NoticeBar);
customElements.define("link-tip", LinkTip);
customElements.define("task-bar", TaskBar);
</script>
</body>
</html>
